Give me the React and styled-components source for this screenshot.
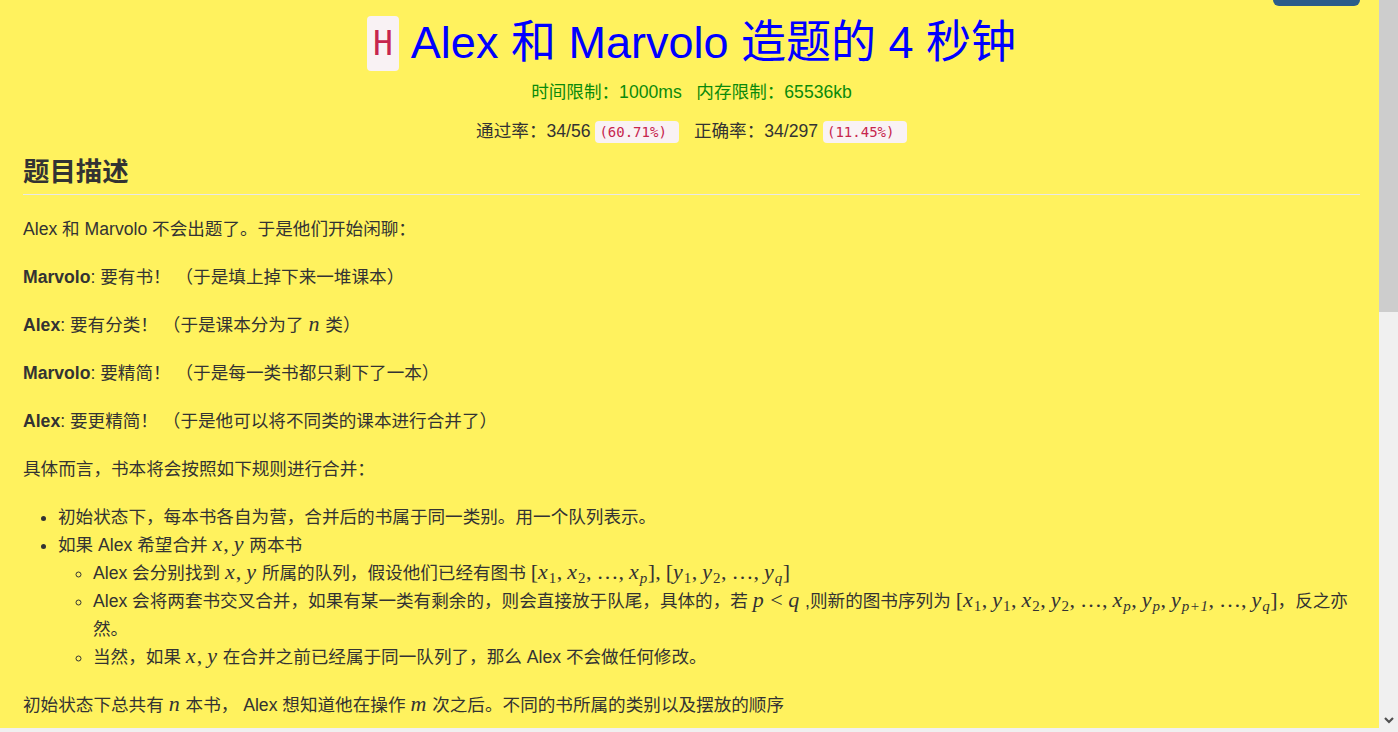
import styled, { createGlobalStyle } from "styled-components";

const GlobalStyle = createGlobalStyle`
  html, body {
    margin: 0;
    padding: 0;
    overflow: hidden;
  }
  body {
    font-family: "Liberation Sans", "Noto Sans CJK SC", sans-serif;
    color: #333;
  }
`;

const Page = styled.div`
  display: flex;
  width: 1398px;
  height: 732px;
  overflow: hidden;
`;

const LeftColumn = styled.div`
  flex: 1;
  display: flex;
  flex-direction: column;
  min-width: 0;
`;

const Main = styled.main`
  height: 728px;
  overflow: hidden;
  background: #fff25e;
  padding: 0 19px 0 23px;
  box-sizing: border-box;
  font-size: 17.6px;
  line-height: 28px;
`;

const BottomStrip = styled.div`
  height: 4px;
  background: #f0f0f0;
`;

const Scrollbar = styled.div`
  width: 19px;
  height: 732px;
  background: #f0f0f0;
  display: flex;
  flex-direction: column;
  align-items: center;
`;

const Thumb = styled.div`
  width: 19px;
  height: 312px;
  background: #cdcdcd;
`;

const ScrollArrow = styled.div`
  margin-top: auto;
  margin-bottom: 8px;
  display: flex;
`;

const TopBar = styled.div`
  display: flex;
  justify-content: flex-end;
  height: 6px;
`;

const TopButton = styled.div`
  width: 87px;
  height: 36px;
  margin-top: -30px;
  background: #2b5c8a;
  border-radius: 6px;
`;

const Title = styled.h1`
  margin: 11px 0 0;
  text-align: center;
  font-size: 45px;
  font-weight: 400;
  line-height: 52px;
  color: #0000ff;
`;

const TitleBadge = styled.code`
  font-family: "DejaVu Sans Mono", monospace;
  font-size: 33px;
  color: #c7254e;
  background: #f9f2f4;
  border-radius: 4px;
  padding: 8px 6px;
  margin-right: 12px;
  vertical-align: 3px;
`;

const InfoLine = styled.p`
  margin: ${(p) => p.$top}px 0 0;
  text-align: center;
  line-height: 22px;
  color: ${(p) => p.$color || "#333"};
`;

const Rate = styled.code`
  font-family: "DejaVu Sans Mono", monospace;
  font-size: 14px;
  color: #c7254e;
  background: #f9f2f4;
  border-radius: 4px;
  padding: 3px 4px;
  white-space: pre;
`;

const SectionTitle = styled.h2`
  margin: 16px 0 20px;
  padding-bottom: 9px;
  font-size: 26.4px;
  line-height: 26px;
  font-weight: 700;
  border-bottom: 1px solid #e8e8e8;
`;

const Para = styled.p`
  margin: 0 0 20px;
`;

const List = styled.ul`
  margin: 0 0 20px;
  padding-left: 35px;
  list-style: ${(p) => (p.$nested ? "circle" : "disc")};

  & & {
    margin: 0;
    padding-left: 35px;
  }
`;

const Item = styled.li``;

const MathSpan = styled.span`
  font-family: "Liberation Serif", "DejaVu Serif", serif;
  font-size: 22px;
  line-height: 18px;
  white-space: nowrap;
`;

const Mi = styled.i`
  font-style: italic;
  letter-spacing: 1px;
`;

const Sub = styled.sub`
  font-size: 15px;
  line-height: 0;
  vertical-align: -4px;
  letter-spacing: 0.5px;
  font-style: ${(p) => (p.$italic ? "italic" : "normal")};
`;

const Thin = styled.span`
  margin-right: 5px;
`;

function Var({ name, sub, subItalic = true }) {
  return (
    <>
      <Mi>{name}</Mi>
      {sub && <Sub $italic={subItalic}>{sub}</Sub>}
    </>
  );
}

function Seq({ items }) {
  return (
    <MathSpan>
      [
      {items.map((it, i) => (
        <span key={i}>
          {it === "…" ? "…" : <Var name={it[0]} sub={it[1]} subItalic={it[2]} />}
          {i < items.length - 1 && (
            <>
              ,<Thin />
            </>
          )}
        </span>
      ))}
      ]
    </MathSpan>
  );
}

function XY() {
  return (
    <MathSpan>
      <Mi>x</Mi>,<Thin />
      <Mi>y</Mi>
    </MathSpan>
  );
}

export default function App() {
  return (
    <>
      <GlobalStyle />
      <Page>
        <LeftColumn>
          <Main>
            <TopBar>
              <TopButton />
            </TopBar>
            <Title>
              <TitleBadge>H</TitleBadge>Alex 和 Marvolo 造题的 4 秒钟
            </Title>
            <InfoLine $top={11} $color="#0a8a0a">
              时间限制：1000ms&nbsp;&nbsp;&nbsp;内存限制：65536kb
            </InfoLine>
            <InfoLine $top={17}>
              通过率：34/56 <Rate>(60.71%) </Rate>&nbsp;&nbsp;&nbsp;正确率：34/297{" "}
              <Rate>(11.45%) </Rate>
            </InfoLine>
            <SectionTitle>题目描述</SectionTitle>
            <Para>Alex 和 Marvolo 不会出题了。于是他们开始闲聊：</Para>
            <Para>
              <b>Marvolo</b>: 要有书！ （于是填上掉下来一堆课本）
            </Para>
            <Para>
              <b>Alex</b>: 要有分类！ （于是课本分为了{" "}
              <MathSpan>
                <Mi>n</Mi>
              </MathSpan>{" "}
              类）
            </Para>
            <Para>
              <b>Marvolo</b>: 要精简！ （于是每一类书都只剩下了一本）
            </Para>
            <Para>
              <b>Alex</b>: 要更精简！ （于是他可以将不同类的课本进行合并了）
            </Para>
            <Para>具体而言，书本将会按照如下规则进行合并：</Para>
            <List>
              <Item>初始状态下，每本书各自为营，合并后的书属于同一类别。用一个队列表示。</Item>
              <Item>
                如果 Alex 希望合并 <XY /> 两本书
                <List $nested>
                  <Item>
                    Alex 会分别找到 <XY /> 所属的队列，假设他们已经有图书{" "}
                    <Seq items={[["x", "1", false], ["x", "2", false], "…", ["x", "p", true]]} />
                    <MathSpan>
                      ,<Thin />
                    </MathSpan>
                    <Seq items={[["y", "1", false], ["y", "2", false], "…", ["y", "q", true]]} />
                  </Item>
                  <Item>
                    Alex 会将两套书交叉合并，如果有某一类有剩余的，则会直接放于队尾，具体的，若{" "}
                    <MathSpan>
                      <Mi>p</Mi> &lt; <Mi>q</Mi>
                    </MathSpan>{" "}
                    ,则新的图书序列为{" "}
                    <Seq
                      items={[
                        ["x", "1", false],
                        ["y", "1", false],
                        ["x", "2", false],
                        ["y", "2", false],
                        "…",
                        ["x", "p", true],
                        ["y", "p", true],
                        ["y", "p+1", true],
                        "…",
                        ["y", "q", true],
                      ]}
                    />
                    ，反之亦然。
                  </Item>
                  <Item>
                    当然，如果 <XY /> 在合并之前已经属于同一队列了，那么 Alex 不会做任何修改。
                  </Item>
                </List>
              </Item>
            </List>
            <Para>
              初始状态下总共有{" "}
              <MathSpan>
                <Mi>n</Mi>
              </MathSpan>{" "}
              本书， Alex 想知道他在操作{" "}
              <MathSpan>
                <Mi>m</Mi>
              </MathSpan>{" "}
              次之后。不同的书所属的类别以及摆放的顺序
            </Para>
          </Main>
          <BottomStrip />
        </LeftColumn>
        <Scrollbar>
          <Thumb />
          <ScrollArrow>
            <svg width="10" height="7" viewBox="0 0 10 7">
              <path d="M1 1 L5 5 L9 1" fill="none" stroke="#505050" strokeWidth="2.2" />
            </svg>
          </ScrollArrow>
        </Scrollbar>
      </Page>
    </>
  );
}
